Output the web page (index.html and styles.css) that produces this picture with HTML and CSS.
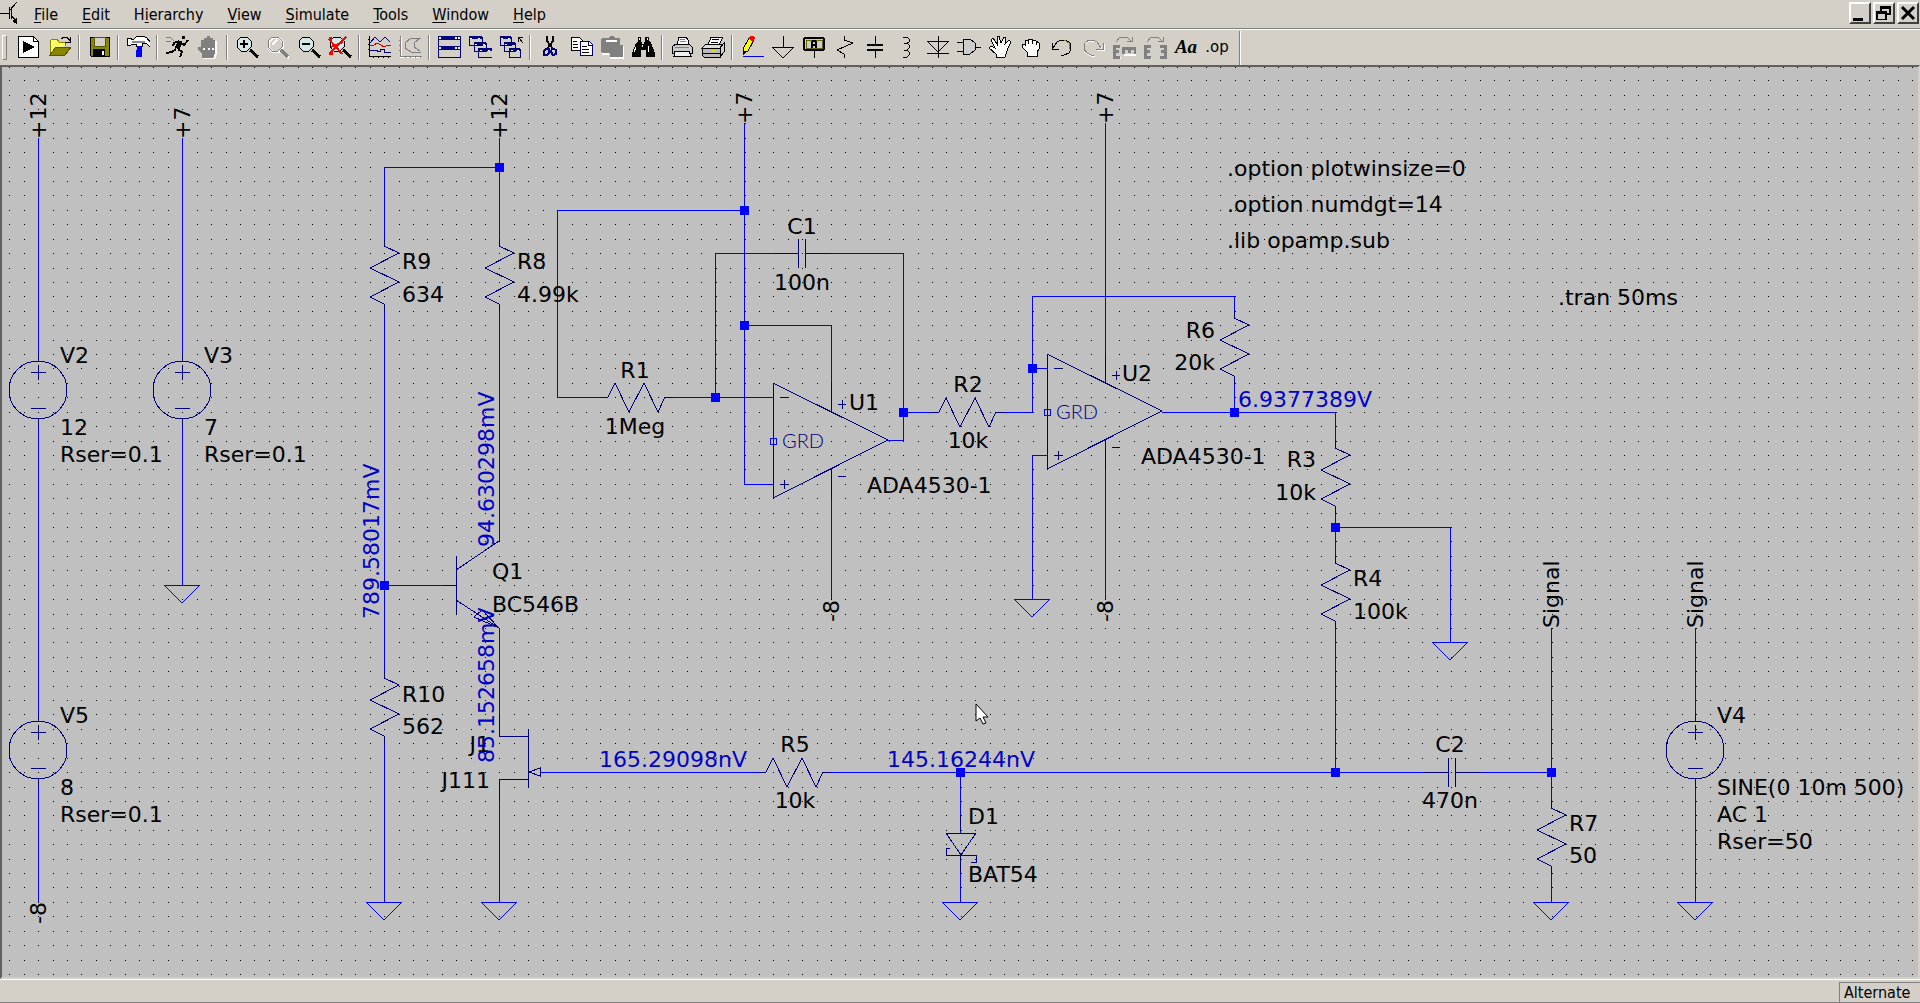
FILE: index.html
```html
<!DOCTYPE html>
<html lang="en">
<head>
<meta charset="utf-8">
<title>Schematic editor</title>
<link rel="stylesheet" href="styles.css">
</head>
<body>
<header class="menubar">
  <svg class="logo" width="18" height="26" viewBox="0 0 18 26" aria-hidden="true">
    <path d="M0 13H9M9 7V19M11 7V19M10 10L17 2M11 15L17 22" class="k"/><path d="M17 24L12 21L17 18Z"/>
  </svg>
  <nav class="menus" aria-label="Main menu">
    <button><u>F</u>ile</button>
    <button><u>E</u>dit</button>
    <button>H<u>i</u>erarchy</button>
    <button><u>V</u>iew</button>
    <button><u>S</u>imulate</button>
    <button><u>T</u>ools</button>
    <button><u>W</u>indow</button>
    <button><u>H</u>elp</button>
  </nav>
  <div class="window-controls">
    <button aria-label="Minimize"><svg width="18" height="18" viewBox="0 0 18 18"><path d="M2 14H12V17H2Z"/></svg></button>
    <button aria-label="Restore"><svg width="18" height="18" viewBox="0 0 18 18"><path d="M5 2H16V11H12V9H14V5H7V7H5ZM1 7H12V16H1ZM3 10V15H10V10Z" fill-rule="evenodd"/></svg></button>
    <button aria-label="Close"><svg width="18" height="18" viewBox="0 0 18 18"><path d="M3 3L15 15M15 3L3 15" class="x"/></svg></button>
  </div>
</header>

<div class="toolbar" role="toolbar" aria-label="Tools">
  <div class="group">
    <button aria-label="Run"><svg viewBox="0 0 24 24"><path d="M1 1H16L21 6V22H1Z" class="kw"/><path d="M16 1V6H21" class="k"/><path d="M6 6L18 12L6 18Z"/></svg></button>
    <button aria-label="Open"><svg viewBox="0 0 24 24"><path d="M2 20V6L4 4H9L11 7H17V11" fill="#ff6" stroke="#880"/><path d="M2 20L8 12H23L17 20Z" fill="#880" stroke="#550"/><path d="M13 4L16 2H19L22 6M22 2V7H17" class="k"/></svg></button>
  </div>
  <div class="group">
    <button aria-label="Save"><svg viewBox="0 0 24 24"><path d="M3 2H22V21H4L3 20Z" fill="#880" stroke="#000"/><path d="M7 2H18V11H7Z" fill="#d4d0c8" stroke="#550"/><path d="M6 14H18V21H6Z"/><path d="M15 16H17V20H15Z" fill="#fff"/></svg></button>
  </div>
  <div class="group">
    <button aria-label="Control panel"><svg viewBox="0 0 24 24"><path d="M1 3H5V4H8L11 1H17L21 3L24 7V12L20 8H16V11H10V9H6L5 10H1Z" fill="#fff" stroke="#000"/><path d="M6 7H19" stroke="#888" stroke-width="2"/><path d="M11 11H15V15H16V22H10V15H11Z" fill="#00f"/><path d="M15 11V22" stroke="#006"/></svg></button>
  </div>
  <div class="group">
    <button aria-label="Simulate"><svg viewBox="0 0 24 24"><path d="M17 1H20V4H17Z"/><path d="M15 6L11 13M16 6L13 14" stroke="#000" stroke-width="3"/><path d="M16 8L19 10L23 5M14 6L9 8L8 11M11 14L7 17L1 18M13 14L17 17L15 22" stroke="#000" stroke-width="2" fill="none"/><path d="M1 2L6 3L9 6M1 6L6 7" class="g"/></svg></button>
    <button aria-label="Halt" disabled><svg viewBox="0 0 24 24"><path d="M6 23V19L2 15V12H5V5H8V3H11V1H14V3H17V5H19V18L17 23Z" fill="#808080"/><path d="M7 14H9M12 14H14M16 14H18M20 6V19L18 24H7" class="w"/></svg></button>
  </div>
  <div class="group">
    <button aria-label="Zoom in"><svg viewBox="0 0 24 24"><path d="M6 2H12L16 6V12L12 16H6L2 12V6Z" class="kc"/><path d="M9 5V13M5 9H13" class="k3"/><path d="M15 15L23 22" class="k4"/></svg></button>
    <button aria-label="Pan" disabled><svg viewBox="0 0 24 24"><path d="M7 3H13L17 7V13L13 17H7L3 13V7Z" class="w"/><path d="M6 2H12L16 6V12L12 16H6L2 12V6Z" class="g"/><path d="M6 10L11 5" class="w"/><path d="M16 17L23 23" class="w"/><path d="M15 15L22 22" stroke="#808080" stroke-width="3"/></svg></button>
    <button aria-label="Zoom out"><svg viewBox="0 0 24 24"><path d="M6 2H12L16 6V12L12 16H6L2 12V6Z" class="kc"/><path d="M5 9H13" class="k3"/><path d="M15 15L23 22" class="k4"/></svg></button>
    <button aria-label="Zoom to fit"><svg viewBox="0 0 24 24"><path d="M6 2H12L16 6V12L12 16H6L2 12V6Z" class="kc"/><path d="M15 15L23 22" class="k4"/><path d="M1 4L14 19M18 2L1 19M3 12L15 7" stroke="#f00" stroke-width="2"/><path d="M1 2H4V5H1ZM1 17H5V20H1Z" fill="#f00"/></svg></button>
  </div>
  <div class="group">
    <button aria-label="Autorange"><svg viewBox="0 0 24 24"><path d="M2 1V21H24M1 4H3M1 9H3M1 14H3M6 21V23M11 21V23M16 21V23M21 21V23" class="k"/><path d="M3 8L8 2L13 7L18 2L23 7M3 15H10V16H13V14H17V17H24" class="n"/><path d="M3 10H7L10 8L14 10L17 12L21 10H24" stroke="#c00" fill="none"/></svg></button>
    <button aria-label="Plot settings" disabled><svg viewBox="0 0 24 24"><path d="M3 2V22H24" class="w"/><path d="M2 1V21H24M1 5H3M1 10H3M1 15H3M7 21V23M12 21V23M17 21V23M22 21V23M13 3L7 8V13L13 17M13 3H23M23 17H13M22 3L16 8V12L22 16" class="g"/></svg></button>
  </div>
  <div class="group">
    <button aria-label="Tile windows"><svg viewBox="0 0 24 24"><path d="M1 2H23V12H1ZM1 12H23V22H1Z" class="nd"/><path d="M1 1H24V5H1ZM1 11H24V15H1Z" class="nf"/><path d="M2 3H4M18 3H20M21 3H23M2 13H4M18 13H20M21 13H23" class="w"/></svg></button>
    <button aria-label="Cascade windows"><svg viewBox="0 0 24 24"><path d="M1 2H14V10H1ZM6 8H18V16H6ZM10 14H24V22H10Z" class="nd"/><path d="M1 1H14V4H1ZM6 7H18V10H6ZM10 13H24V16H10Z" class="nf"/><path d="M2 3H4M10 3H12M7 9H9M15 9H17M12 15H14M20 15H22" class="w1"/></svg></button>
    <button aria-label="Close all windows"><svg viewBox="0 0 24 24"><path d="M1 2H12V10H1ZM5 8H16V16H5ZM10 14H21V22H10Z" class="nd"/><path d="M1 1H12V4H1ZM5 7H16V10H5ZM10 13H21V16H10Z" class="nf"/><path d="M2 3H4M9 3H11M6 9H8M12 15H14M18 15H20" class="w1"/><path d="M19 7V2H24M20 3L24 8" class="k"/></svg></button>
  </div>
  <div class="group">
    <button aria-label="Cut"><svg viewBox="0 0 24 24"><path d="M9 1V6L15 14M15 1V6L9 14" class="k3"/><path d="M8 14H11V18L9 20H6V16ZM14 13L18 15V19L15 20L13 17Z" fill="none" stroke="#00007f" stroke-width="2"/></svg></button>
    <button aria-label="Copy"><svg viewBox="0 0 24 24"><path d="M2 2H10L13 5V15H2Z" class="kw"/><path d="M4 6H8M4 9H9M4 12H9" class="k"/><path d="M11 6H20L23 9V20H11Z" fill="#fff" stroke="#00007f"/><path d="M19 6V10H23" class="n"/><path d="M13 11H18M13 14H20M13 17H20" class="k"/></svg></button>
    <button aria-label="Paste" disabled><svg viewBox="0 0 24 24"><path d="M1 4L3 3H8L10 1H13L15 3H20V10H23V22H10V18H3L1 17Z" fill="#808080"/><path d="M6 6H17M10 23H24V11M2 19H9" class="w"/></svg></button>
    <button aria-label="Find"><svg viewBox="0 0 24 24"><path d="M7 2H10V7H11V9H13V7H14V2H18V6L20 8L24 18V22H15V15H10V22H1V18L5 8L7 6Z"/><path d="M8 3V5M16 3V5M5 12L3 17M11 10V12M17 11V17" class="w1"/></svg></button>
  </div>
  <div class="group">
    <button aria-label="Print"><svg viewBox="0 0 24 24"><path d="M7 10L9 2H16L18 5V10" class="kw"/><path d="M2 12L6 9H19L22 12V18H2Z" fill="#ccc" stroke="#000"/><path d="M5 16H19L21 21H4Z" fill="#eee" stroke="#000"/><path d="M10 4H15M10 6H16M5 12H19" class="g"/></svg></button>
    <button aria-label="Print setup"><svg viewBox="0 0 24 24"><path d="M7 10L10 2H22L18 10" class="kw"/><path d="M11 4H18M10 7H17" class="k"/><path d="M1 13L5 9H22L19 13Z" fill="#ddd" stroke="#000"/><path d="M1 13H19V22H3L1 20Z" fill="#bbb" stroke="#000"/><path d="M19 13L23 8V17L19 22M1 18H19" class="k"/><path d="M10 16H15" stroke="#dd0" stroke-width="2"/></svg></button>
  </div>
  <div class="group wide">
    <button aria-label="Wire"><svg viewBox="0 0 24 24"><path d="M3 19V14L9 3L14 5L8 16Z" fill="#ff0" stroke="#000"/><path d="M10 1H13L15 3L13 7L9 4Z" fill="#f00"/><path d="M3 15V20L7 17Z"/><path d="M3 21H24" stroke="#00f"/></svg></button>
    <button aria-label="Ground"><svg viewBox="0 0 24 24"><path d="M12 1V12M1 12H23L12 23Z" class="k2"/></svg></button>
    <button aria-label="Label net"><svg viewBox="0 0 24 24"><rect x="2" y="3" width="20" height="12" rx="2" fill="#ccc" stroke="#000" stroke-width="2"/><path d="M4 5H20V13H4Z" stroke="#660" fill="none"/><path d="M12 15V23" class="k2"/><path d="M10 13V7L11 6H13L14 7V13M10 10H14" class="k3"/></svg></button>
    <button aria-label="Resistor"><svg viewBox="0 0 24 24"><path d="M11 1V5L20 8L4 15L11 19V23" class="k2"/></svg></button>
    <button aria-label="Capacitor"><svg viewBox="0 0 24 24"><path d="M11 1V10M11 15V23" class="k2"/><path d="M3 10H19M3 15H19" class="k3"/></svg></button>
    <button aria-label="Inductor"><svg viewBox="0 0 24 24"><path d="M8 2H12L14 4V7L12 8H9M12 8L14 10V13L12 15H9M12 15L14 17V20L12 22H8" class="k2"/></svg></button>
    <button aria-label="Diode"><svg viewBox="0 0 24 24"><path d="M12 1V23M1 6H23L12 17ZM1 18H23" class="k2"/></svg></button>
    <button aria-label="Component"><svg viewBox="0 0 24 24"><path d="M6 4H13L18 8V15L13 19H6Z" class="k2 f"/><path d="M0 7H6M0 16H6M18 12H24" class="k2"/></svg></button>
    <button aria-label="Move"><svg viewBox="0 0 24 24"><path d="M8 22V19L1 13L3 11L7 13L3 5L5 3L9 9V2L11 1L13 8L16 2L18 3L17 9L21 5L23 7L20 13L17 22Z" class="kw"/></svg></button>
    <button aria-label="Drag"><svg viewBox="0 0 24 24"><path d="M8 21V17L3 12V9L6 10V6L9 5L11 4L14 5L17 6L20 8V14L18 17V21Z" class="kw"/><path d="M9 5V9M13 5V9M17 6V10" class="k"/></svg></button>
    <button aria-label="Undo"><svg viewBox="0 0 24 24"><path d="M3 13L7 7L11 5H16L20 8L21 14L19 18L14 20H11" class="k2"/><path d="M14 5L19 8L20 14" stroke="#880" fill="none"/><path d="M2 8V14H9" class="k2"/></svg></button>
    <button aria-label="Redo" disabled><svg viewBox="0 0 24 24"><path d="M21 14L17 8L13 6H8L4 9L3 15L6 19L10 21H14M23 9V15H16" class="w1"/><path d="M20 13L16 7L12 5H8L4 8L3 14L6 18L10 20H13M22 8V14H15" class="g"/></svg></button>
    <button aria-label="Rotate" disabled><svg viewBox="0 0 24 24"><path d="M2 12V23H9M12 20H24V13" class="w"/><path d="M8 11H2V22H8M2 16H7M11 19V13H23V19M17 13V18" stroke="#808080" stroke-width="3" fill="none"/><path d="M4 7L8 2H15L19 6M20 2V6H15" class="g"/></svg></button>
    <button aria-label="Mirror" disabled><svg viewBox="0 0 24 24"><path d="M2 24H9M17 24H24V11" class="w"/><path d="M8 11H2V22H8M2 16H7M17 11H22V22H17M22 16H18" stroke="#808080" stroke-width="3" fill="none"/><path d="M4 7L8 2H15L19 6M20 2V6H15" class="g"/></svg></button>
    <button class="text-tool aa">Aa</button>
    <button class="text-tool">.op</button>
  </div>
</div>

<main class="sheet">
<svg class="schematic" width="100%" height="100%" role="img" aria-label="Circuit schematic">
  <defs>
    <path id="dots" d="M0 0h1v1h-1zM15 0h1v1h-1zM29 0h1v1h-1zM44 0h1v1h-1zM58 0h1v1h-1zM72 0h1v1h-1zM87 0h1v1h-1zM101 0h1v1h-1zM116 0h1v1h-1zM130 0h1v1h-1zM144 0h1v1h-1zM159 0h1v1h-1z"/>
    <pattern id="grid" x="7" y="13" width="173" height="173" patternUnits="userSpaceOnUse">
      <use href="#dots"/><use href="#dots" y="15"/><use href="#dots" y="29"/><use href="#dots" y="43"/><use href="#dots" y="58"/><use href="#dots" y="72"/><use href="#dots" y="87"/><use href="#dots" y="101"/><use href="#dots" y="115"/><use href="#dots" y="130"/><use href="#dots" y="144"/><use href="#dots" y="159"/>
    </pattern>
    <pattern id="toprow" x="7" y="0" width="173" height="20" patternUnits="userSpaceOnUse"><use href="#dots"/></pattern>
    <path id="res" d="M0 0V7L15 14L-14 29L15 43L-14 58L0 65V72"/>
    <path id="resh" d="M0 0H7L14 -14L28 15L43 -14L57 15L64 0H72"/>
    <path id="cap" d="M0 0H24M24 -14V15M31 -14V15M31 0H57"/>
    <path id="gnd" d="M-18 0H18L0 18Z"/>
    <rect id="node" x="-4" y="-4" width="9" height="9"/>
    <g id="src"><circle cx="0" cy="36" r="29"/><path d="M0 0V7M0 65V72M-7 18H8M0 11V26M-7 54H8"/></g>
    <g id="opamp"><path d="M0 0V115L115 57ZM7 14H15M7 101H15M11 97V106M65 21H73M69 17V26M65 93H73M58 0V29M58 86V115"/><path class="pin" d="M-3 55H3V61H-3Z"/></g>
  </defs>
  <rect width="100%" height="100%" fill="url(#grid)"/>
  <rect width="100%" height="1" fill="url(#toprow)"/>

  <g transform="translate(-2 -67)" class="lines">
    <g class="wire">
      <path d="M38 138V354M38 426V714M38 786V902M182 138V354M182 426V585"/>
      <path d="M499 138V239M499 167H384V239M384 311V671M384 743V902M384 585H443M499 311V541M499 628V714M499 801V902"/>
      <path d="M744 123V484H773M744 210H557V397H601M673 397H773M715 397V253H774M831 253H903V440H888M744 325H831V383M831 498V599M903 412H932M1004 412H1032V296H1234V311M1032 368H1047M1047 455H1032V599M1105 123V354M1105 469V599"/>
      <path d="M1234 383V412M1162 412H1335V441M1335 513V556M1335 527H1450V642M1335 628V772M540 772H759M831 772H1424M1481 772H1551M960 772V815M960 873V902M1551 628V801M1551 873V902M1695 628V714M1695 786V902"/>
      <use href="#gnd" x="182" y="585"/><use href="#gnd" x="384" y="902"/><use href="#gnd" x="499" y="902"/><use href="#gnd" x="1032" y="599"/><use href="#gnd" x="1450" y="642"/><use href="#gnd" x="960" y="902"/><use href="#gnd" x="1551" y="902"/><use href="#gnd" x="1695" y="902"/>
    </g>
    <g class="part">
      <use href="#src" x="38" y="354"/><use href="#src" x="182" y="354"/><use href="#src" x="38" y="714"/><use href="#src" x="1695" y="714"/>
      <use href="#res" x="384" y="239"/><use href="#res" x="499" y="239"/><use href="#res" x="384" y="671"/><use href="#res" x="1234" y="311"/><use href="#res" x="1335" y="441"/><use href="#res" x="1335" y="556"/><use href="#res" x="1551" y="801"/>
      <use href="#resh" x="601" y="397"/><use href="#resh" x="932" y="412"/><use href="#resh" x="759" y="772"/>
      <use href="#cap" x="774" y="253"/><use href="#cap" x="1424" y="772"/>
      <use href="#opamp" x="773" y="383"/><use href="#opamp" x="1047" y="354"/>
      <path d="M443 585H456M456 556V614M456 570L499 541M456 600L499 628M499 628L474 617L482 610Z"/>
      <path d="M499 714V736H528M528 729V787M528 779H499V801M529 772L540 768V776Z"/>
      <path d="M960 815V833M946 833H976L961 855ZM950 848H946V855H976V862H971M960 855V873"/>
    </g>
    <g class="nodes">
      <use href="#node" x="499" y="167"/><use href="#node" x="384" y="585"/><use href="#node" x="744" y="210"/><use href="#node" x="744" y="325"/><use href="#node" x="715" y="397"/><use href="#node" x="903" y="412"/><use href="#node" x="1032" y="368"/><use href="#node" x="1234" y="412"/><use href="#node" x="1335" y="527"/><use href="#node" x="1335" y="772"/><use href="#node" x="960" y="772"/><use href="#node" x="1551" y="772"/>
    </g>
  </g>

  <g transform="translate(-2 -67)">
    <g class="label">
      <text x="60" y="363">V2</text><text x="60" y="435">12</text><text x="60" y="462">Rser=0.1</text>
      <text x="204" y="363">V3</text><text x="204" y="435">7</text><text x="204" y="462">Rser=0.1</text>
      <text x="60" y="723">V5</text><text x="60" y="795">8</text><text x="60" y="822">Rser=0.1</text>
      <text x="1717" y="723">V4</text><text x="1717" y="795">SINE(0 10m 500)</text><text x="1717" y="822">AC 1</text><text x="1717" y="849">Rser=50</text>
      <text x="402" y="269">R9</text><text x="402" y="302">634</text>
      <text x="517" y="269">R8</text><text x="517" y="302">4.99k</text>
      <text x="402" y="702">R10</text><text x="402" y="734">562</text>
      <text x="492" y="579">Q1</text><text x="492" y="612">BC546B</text>
      <text x="849" y="410">U1</text><text x="867" y="493">ADA4530-1</text>
      <text x="1122" y="381">U2</text><text x="1141" y="464">ADA4530-1</text>
      <text x="1353" y="586">R4</text><text x="1353" y="619">100k</text>
      <text x="968" y="824">D1</text><text x="968" y="882">BAT54</text>
      <text x="1569" y="831">R7</text><text x="1569" y="863">50</text>
      <text x="1227" y="176">.option plotwinsize=0</text><text x="1227" y="212">.option numdgt=14</text><text x="1227" y="248">.lib opamp.sub</text>
      <text x="1558" y="305">.tran 50ms</text>
    </g>
    <g class="label mid">
      <text x="635" y="378">R1</text><text x="635" y="434">1Meg</text>
      <text x="802" y="234">C1</text><text x="802" y="290">100n</text>
      <text x="968" y="392">R2</text><text x="968" y="448">10k</text>
      <text x="795" y="752">R5</text><text x="795" y="808">10k</text>
      <text x="1450" y="752">C2</text><text x="1450" y="808">470n</text>
    </g>
    <g class="label end">
      <text x="490" y="752">J1</text><text x="490" y="788">J111</text>
      <text x="1215" y="338">R6</text><text x="1215" y="370">20k</text>
      <text x="1316" y="467">R3</text><text x="1316" y="500">10k</text>
      <text transform="translate(46 902) rotate(-90)">-8</text>
      <text transform="translate(839 600) rotate(-90)">-8</text>
      <text transform="translate(1113 600) rotate(-90)">-8</text>
    </g>
    <g class="label">
      <text transform="translate(46 139) rotate(-90)">+12</text>
      <text transform="translate(190 139) rotate(-90)">+7</text>
      <text transform="translate(507 139) rotate(-90)">+12</text>
      <text transform="translate(752 124) rotate(-90)">+7</text>
      <text transform="translate(1113 124) rotate(-90)">+7</text>
      <text transform="translate(1559 628) rotate(-90)">Signal</text>
      <text transform="translate(1703 628) rotate(-90)">Signal</text>
    </g>
    <g class="label volts">
      <text transform="translate(379 619) rotate(-90)">789.58017mV</text>
      <text transform="translate(494 547) rotate(-90)">94.630298mV</text>
      <text transform="translate(494 763) rotate(-90)">85.152658mV</text>
      <text x="599" y="767">165.29098nV</text><text x="887" y="767">145.16244nV</text><text x="1238" y="407">6.9377389V</text>
    </g>
    <g class="symtext"><text x="782" y="448">GRD</text><text x="1056" y="419">GRD</text></g>
    <path class="pointer" d="M976 704V721L980 718L983 724L986 723L983 717H988Z"/>
  </g>
</svg>
</main>

<footer class="statusbar"><span class="panel">Alternate</span></footer>
</body>
</html>
```
FILE: styles.css
```css
* { box-sizing: border-box; }
body {
  margin: 0;
  height: 100vh;
  display: flex;
  flex-direction: column;
  overflow: hidden;
  background: #d4d0c8;
  color: #000;
  font: 16px/20px "DejaVu Sans Condensed", "DejaVu Sans", sans-serif;
  font-stretch: condensed;
}
button {
  margin: 0;
  padding: 0;
  border: 0;
  background: none;
  color: inherit;
  font: inherit;
}
.menubar {
  display: flex;
  height: 29px;
  border-bottom: 1px solid #808080;
}
.logo { flex: none; shape-rendering: crispEdges; }
.menus { display: flex; flex: 1; padding-left: 4px; }
.menus button { padding: 0 12px; height: 29px; }
.menus u { text-underline-offset: 2px; }
.window-controls { display: flex; gap: 2px; padding: 2px 1px 0 0; }
.window-controls button {
  width: 22px;
  height: 22px;
  border: 2px solid;
  border-color: #fff #404040 #404040 #fff;
}
.window-controls svg { display: block; }
.x { stroke: #000; stroke-width: 3; }

.toolbar {
  display: flex;
  height: 36px;
  padding: 5px 0 5px 2px;
  border-top: 1px solid #fff;
}
.toolbar::before {
  content: "";
  width: 3px;
  margin-right: 3px;
  border: 1px solid;
  border-color: #fff #808080 #808080 #fff;
}
.group {
  display: flex;
  gap: 7px;
  margin-right: 1px;
  padding: 0 6px 0 7px;
  border-right: 1px solid #808080;
  box-shadow: 1px 0 #fff;
}
.group.wide { padding-right: 10px; margin-block: -4px -5px; padding-block: 4px 5px; }
.toolbar button { width: 24px; height: 24px; }
.toolbar svg { display: block; width: 24px; height: 24px; shape-rendering: crispEdges; }
.toolbar .text-tool { font: 15px/24px "DejaVu Sans", sans-serif; white-space: nowrap; }
.toolbar .aa { font: italic bold 19px/24px "Liberation Serif", serif; }

.k, .k2 { fill: none; stroke: #000; }
.k3 { fill: none; stroke: #000; stroke-width: 2; }
.k2.f { fill: #ccc; }
.k4 { stroke: #000; stroke-width: 3; }
.kw { fill: #fff; stroke: #000; }
.kc { fill: #d4e8e8; stroke: #000; }
.g { fill: none; stroke: #808080; }
.w { fill: none; stroke: #fff; stroke-width: 2; }
.w1 { fill: none; stroke: #fff; }
.n { fill: none; stroke: #00007f; }
.nd { fill: #d4d0c8; stroke: #00007f; }
.nf { fill: #00007f; }

.sheet {
  flex: 1;
  min-height: 0;
  border: 2px solid;
  border-color: #606060 #d4d0c8 #d4d0c8 #606060;
  background: #c0c0c0;
  overflow: hidden;
}
.schematic { display: block; }
.schematic pattern, .lines { shape-rendering: crispEdges; }
.wire { fill: none; stroke: #00f; }
.part { fill: none; stroke: #00007f; }
.pin { stroke: #00f; }
.nodes { fill: #00f; }
.label { font: 22px "DejaVu Sans", sans-serif; }
.mid { text-anchor: middle; }
.end { text-anchor: end; }
.volts { fill: #0000c8; }
.symtext { font: 300 20px Lato, sans-serif; fill: #00007f; }
.pointer { fill: #fff; stroke: #000; }

.statusbar {
  display: flex;
  justify-content: flex-end;
  height: 24px;
  padding-top: 2px;
  border-top: 1px solid #fff;
  border-bottom: 1px solid #808080;
}
.panel {
  width: 81px;
  padding: 0 8px 0 4px;
  border: solid #808080;
  border-width: 1px 0 0 1px;
  line-height: 20px;
}
```
